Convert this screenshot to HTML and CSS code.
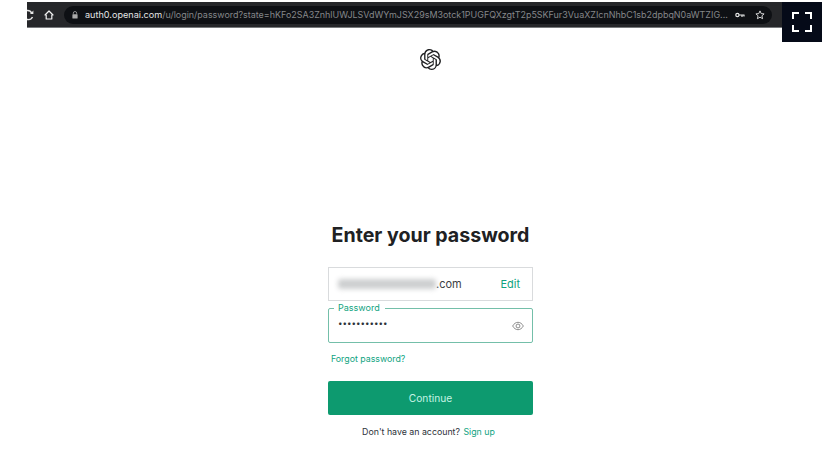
FILE: index.html
```html
<!DOCTYPE html>
<html lang="en">
<head>
    <meta charset="UTF-8">
    <meta name="viewport" content="width=device-width, initial-scale=1.0">
    <title>Enter your password</title>
    <link rel="stylesheet" href="styles.css">
</head>
<body class="mainBody">
    <div class="topArea">
        <div class="browserBar">
            <svg class="reloadIcon" width="7" height="14" viewBox="1 0 7 14"><path d="M0 2.500h1.500a4.500 4.500 0 0 1 4.200 2.600M6.500 9a4.500 4.500 0 0 1-5 2.500H0" fill="none" stroke="#e8e8e8" stroke-width="1.400"/><path d="M7.400 2.600v3.500H4z" fill="#e8e8e8"/></svg>
            <svg class="homeIcon" width="10" height="10" viewBox="0 0 10 10"><path d="M5 1L1 5h1.200v4h5.600V5H9z" fill="none" stroke="#f2f2f2" stroke-width="1.200" stroke-linejoin="round"/></svg>
            <div class="addressBox">
                <svg class="lockIcon" width="6" height="8" viewBox="0 0 6 8"><path d="M1.300 3.400V2.200a1.700 1.700 0 0 1 3.400 0v1.200" fill="none" stroke="#aaa" stroke-width=".8"/><rect x=".4" y="3.200" width="5.200" height="4.300" rx=".6" fill="#aaa"/></svg>
                <div class="urlText"><span class="urlHost">auth0.openai.com</span>/u/login/password?state=hKFo2SA3ZnhlUWJLSVdWYmJSX29sM3otck1PUGFQXzgtT2p5SKFur3VuaXZIcnNhbC1sb2dpbqN0aWTZIG...</div>
                <svg class="keyIcon" width="10" height="6" viewBox="0 0 10 6"><circle cx="2.400" cy="3" r="1.600" fill="none" stroke="#e6e6e6" stroke-width="1.200"/><path d="M4 3h5.500M7 3v2M9 3v1.600" fill="none" stroke="#e6e6e6" stroke-width="1.200"/></svg>
                <svg class="starIcon" width="10" height="10" viewBox="0 0 10 10"><path d="M5 .9l1.200 2.700 2.900.3-2.200 1.900.7 2.900L5 7.200 2.400 8.700l.7-2.900L.9 3.900l2.900-.3z" fill="none" stroke="#e6e6e6" stroke-width=".9"/></svg>
            </div>
        </div>
        <div class="fullscreenBtn">
            <svg width="20" height="20" viewBox="0 0 20 20"><path d="M1 7V1h6M13 1h6v6M1 13v6h6M13 19h6v-6" fill="none" stroke="#fff" stroke-width="2"/></svg>
        </div>
    </div>

    <div class="logo">
        <svg width="21" height="21" viewBox="0 0 24 24"><path fill="#202123" d="M22.2819 9.8211a5.9847 5.9847 0 0 0-.5157-4.9108 6.0462 6.0462 0 0 0-6.5098-2.9A6.0651 6.0651 0 0 0 4.9807 4.1818a5.9847 5.9847 0 0 0-3.9977 2.9 6.0462 6.0462 0 0 0 .7427 7.0966 5.98 5.98 0 0 0 .511 4.9107 6.051 6.051 0 0 0 6.5146 2.9001A5.9847 5.9847 0 0 0 13.2599 24a6.0557 6.0557 0 0 0 5.7718-4.2058 5.9894 5.9894 0 0 0 3.9977-2.9001 6.0557 6.0557 0 0 0-.7475-7.0729zm-9.022 12.6081a4.4755 4.4755 0 0 1-2.8764-1.0408l.1419-.0804 4.7783-2.7582a.7948.7948 0 0 0 .3927-.6813v-6.7369l2.02 1.1686a.071.071 0 0 1 .038.052v5.5826a4.504 4.504 0 0 1-4.4945 4.4944zm-9.6607-4.1254a4.4708 4.4708 0 0 1-.5346-3.0137l.142.0852 4.783 2.7582a.7712.7712 0 0 0 .7806 0l5.8428-3.3685v2.3324a.0804.0804 0 0 1-.0332.0615L9.74 19.9502a4.4992 4.4992 0 0 1-6.1408-1.6464zM2.3408 7.8956a4.485 4.485 0 0 1 2.3655-1.9728V11.6a.7664.7664 0 0 0 .3879.6765l5.8144 3.3543-2.0201 1.1685a.0757.0757 0 0 1-.071 0l-4.8303-2.7865A4.504 4.504 0 0 1 2.3408 7.872zm16.5963 3.8558L13.1038 8.364 15.1192 7.2a.0757.0757 0 0 1 .071 0l4.8303 2.7913a4.4944 4.4944 0 0 1-.6765 8.1042v-5.6772a.79.79 0 0 0-.407-.667zm2.0107-3.0231l-.142-.0852-4.7735-2.7818a.7759.7759 0 0 0-.7854 0L9.409 9.2297V6.8974a.0662.0662 0 0 1 .0284-.0615l4.8303-2.7866a4.4992 4.4992 0 0 1 6.6802 4.66zM8.3065 12.863l-2.02-1.1638a.0804.0804 0 0 1-.038-.0567V6.0742a4.4992 4.4992 0 0 1 7.3757-3.4537l-.142.0805L8.704 5.459a.7948.7948 0 0 0-.3927.6813zm1.0976-2.3654l2.602-1.4998 2.6069 1.4998v2.9994l-2.5974 1.4997-2.6067-1.4997Z"/></svg>
    </div>

    <div class="content">
        <h1 class="title">Enter your password</h1>
        <div class="emailField">
            <span class="blurredName"></span><span class="emailEnd">.com</span>
            <a class="editLink">Edit</a>
        </div>
        <div class="passwordField">
            <span class="passwordLabel">Password</span>
            <span class="passwordDots">•••••••••••</span>
            <svg class="eyeIcon" width="12" height="10" viewBox="0 0 13 10"><path d="M.7 5C2.200 2.400 4.200 1 6.500 1s4.300 1.400 5.800 4c-1.500 2.600-3.500 4-5.800 4S2.200 7.600.7 5z" fill="none" stroke="#777" stroke-width=".9"/><circle cx="6.500" cy="5" r="2.100" fill="none" stroke="#777" stroke-width=".9"/></svg>
        </div>
        <a class="forgotLink">Forgot password?</a>
        <button class="continueBtn" type="button">Continue</button>
        <p class="signupRow">Don't have an account? <a class="signupLink">Sign up</a></p>
    </div>
</body>
</html>
```

FILE: styles.css
```css
* {
    box-sizing: border-box;
}
.mainBody {
    margin: 0;
    height: 458px;
    overflow: hidden;
    background-color: #fff;
    font-family: Inter, "Liberation Sans", sans-serif;
}
.topArea {
    display: flex;
    align-items: flex-start;
    height: 40px;
    margin: 2px 11px 0 27px;
}
.browserBar {
    flex: 1;
    min-width: 0;
    display: flex;
    align-items: center;
    height: 26px;
    background-color: #26272a;
    border-bottom: 1px solid #77797c;
}
.reloadIcon {
    flex: none;
}
.homeIcon {
    flex: none;
    margin-left: 10px;
}
.addressBox {
    flex: 1;
    min-width: 0;
    display: flex;
    align-items: center;
    height: 18px;
    margin: 0 10px 0 10px;
    padding: 0 7px 0 8px;
    background-color: #0e1014;
    border-radius: 9px;
}
.lockIcon {
    flex: none;
}
.urlText {
    flex: 1;
    min-width: 0;
    margin-left: 7px;
    overflow: hidden;
    white-space: nowrap;
    color: #85878a;
    font-size: 8.95px;
}
.urlHost {
    color: #e4e5e6;
    font-size: 9.1px;
}
.keyIcon {
    flex: none;
    margin-left: 3px;
}
.starIcon {
    flex: none;
    margin-left: 10px;
}
.fullscreenBtn {
    display: flex;
    align-items: center;
    justify-content: center;
    flex: none;
    width: 40px;
    height: 40px;
    background-color: #050a18;
}
.logo {
    display: flex;
    justify-content: center;
    width: 205px;
    height: 21px;
    margin: 7px 0 0 328px;
}
.content {
    width: 205px;
    margin: 0 0 0 328px;
}
.title {
    margin: 150px 0 0 0;
    height: 30px;
    color: #202123;
    font-size: 19.6px;
    font-weight: 700;
    line-height: 30px;
    text-align: center;
    white-space: nowrap;
}
.emailField {
    display: flex;
    align-items: center;
    height: 34px;
    margin-top: 17px;
    padding: 0 12px 0 9px;
    border: 1px solid #d9dbdd;
    color: #3c4043;
    font-size: 11px;
}
.blurredName {
    width: 98px;
    height: 10px;
    background-color: #cdcfd0;
    border-radius: 3px;
    filter: blur(2.5px);
}
.emailEnd {
    flex: 1;
}
.editLink {
    color: #10a37f;
    font-size: 11px;
}
.passwordField {
    position: relative;
    display: flex;
    align-items: center;
    justify-content: space-between;
    height: 35px;
    margin-top: 7px;
    padding: 0 8px 0 9px;
    border: 1px solid #74bfa9;
    border-radius: 2px;
}
.passwordLabel {
    position: absolute;
    left: 5px;
    top: -7px;
    padding: 0 5px 0 4px;
    background-color: #fff;
    color: #10a37f;
    font-size: 9px;
    line-height: 11px;
}
.passwordDots {
    margin-bottom: 5px;
    color: #2d333a;
    font-size: 8px;
}
.forgotLink {
    display: block;
    margin: 10px 0 0 3px;
    color: #10a37f;
    font-size: 8.8px;
    line-height: 12px;
}
.continueBtn {
    display: block;
    width: 100%;
    height: 34px;
    margin-top: 16px;
    border: none;
    border-radius: 2px;
    background-color: #0d9a6f;
    color: #c5f3e4;
    font-family: inherit;
    font-size: 10.2px;
}
.signupRow {
    margin: 11px 0 0 0;
    padding-right: 4px;
    color: #2d333a;
    font-size: 8.8px;
    line-height: 12px;
    text-align: center;
}
.signupLink {
    margin-left: 1px;
    color: #10a37f;
}
```
